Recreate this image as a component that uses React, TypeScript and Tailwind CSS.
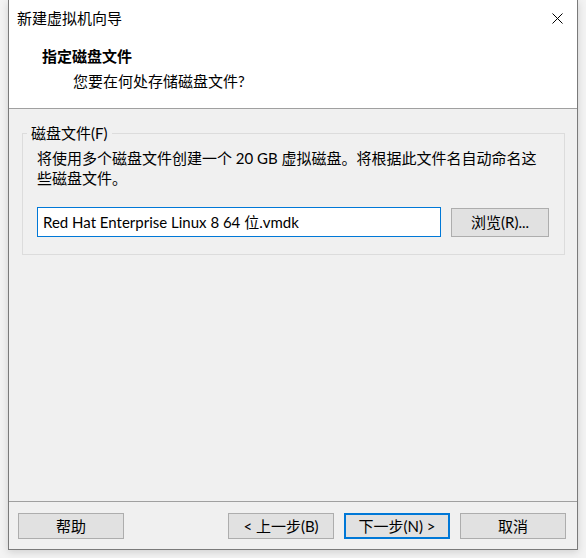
import React from "react";

const font = "font-['Segoe_UI','Lato','Noto_Sans_CJK_SC',sans-serif]";

// Windows-style push button
const WinButton = ({ label, primary }: { label: string; primary?: boolean }) => (
  <button
    className={`h-[26px] w-[106px] text-[15px] leading-none text-black ${
      primary ? "border-2 border-[#0078d7] bg-[#e1e1e1]" : "border border-[#adadad] bg-[#e1e1e1]"
    }`}
  >
    {label}
  </button>
);

export default function App() {
  return (
    <div className={`h-[558px] w-[586px] bg-[#f3f3f3] ${font} text-black`}>
      <div className="ml-[8px] flex h-[550px] w-[570px] flex-col border-x border-b border-[#7a7a7a] bg-[#f0f0f0] shadow-[0_2px_8px_rgba(0,0,0,0.15)]">
        {/* title bar + header */}
        <div className="flex h-[109px] flex-col border-b border-[#a0a0a0] bg-white">
          <div className="flex h-[36px] items-center justify-between pl-[8px] pr-[14px]">
            <span className="text-[15px] leading-[20px]">新建虚拟机向导</span>
            <svg width="11" height="11" viewBox="0 0 11 11" className="text-black">
              <path d="M0.5 0.5 L10.5 10.5 M10.5 0.5 L0.5 10.5" stroke="currentColor" strokeWidth="1" />
            </svg>
          </div>
          <div className="mt-[10px] pl-[33px] text-[15px] font-bold leading-[20px]">指定磁盘文件</div>
          <div className="mt-[5px] pl-[64px] text-[15px] leading-[20px]">您要在何处存储磁盘文件?</div>
        </div>

        {/* body */}
        <div className="flex-1 pl-[13px] pr-[12px] pt-[14px]">
          <fieldset className="border border-[#dcdcdc] px-[14px] pb-[17px]">
            <legend className="ml-[-10px] px-[4px] text-[15px] leading-[20px]">磁盘文件(F)</legend>
            <p className="pt-[5px] text-[15px] leading-[20px]">
              将使用多个磁盘文件创建一个 20 GB 虚拟磁盘。将根据此文件名自动命名这
              <br />
              些磁盘文件。
            </p>
            <div className="mt-[19px] flex items-center gap-[10px]">
              <div className="flex h-[30px] w-[404px] items-center border border-[#0078d7] bg-white pl-[5px] text-[15px]">
                Red Hat Enterprise Linux 8 64 位.vmdk
              </div>
              <button className="h-[29px] w-[98px] border border-[#adadad] bg-[#e1e1e1] text-[15px] leading-none">
                浏览(R)...
              </button>
            </div>
          </fieldset>
        </div>

        {/* footer */}
        <div className="flex h-[48px] items-start border-t border-[#a0a0a0] pl-[9px] pr-[11px] pt-[11px]">
          <WinButton label="帮助" />
          <div className="ml-auto flex gap-[10px]">
            <WinButton label="< 上一步(B)" />
            <WinButton label="下一步(N) >" primary />
            <WinButton label="取消" />
          </div>
        </div>
      </div>
    </div>
  );
}
